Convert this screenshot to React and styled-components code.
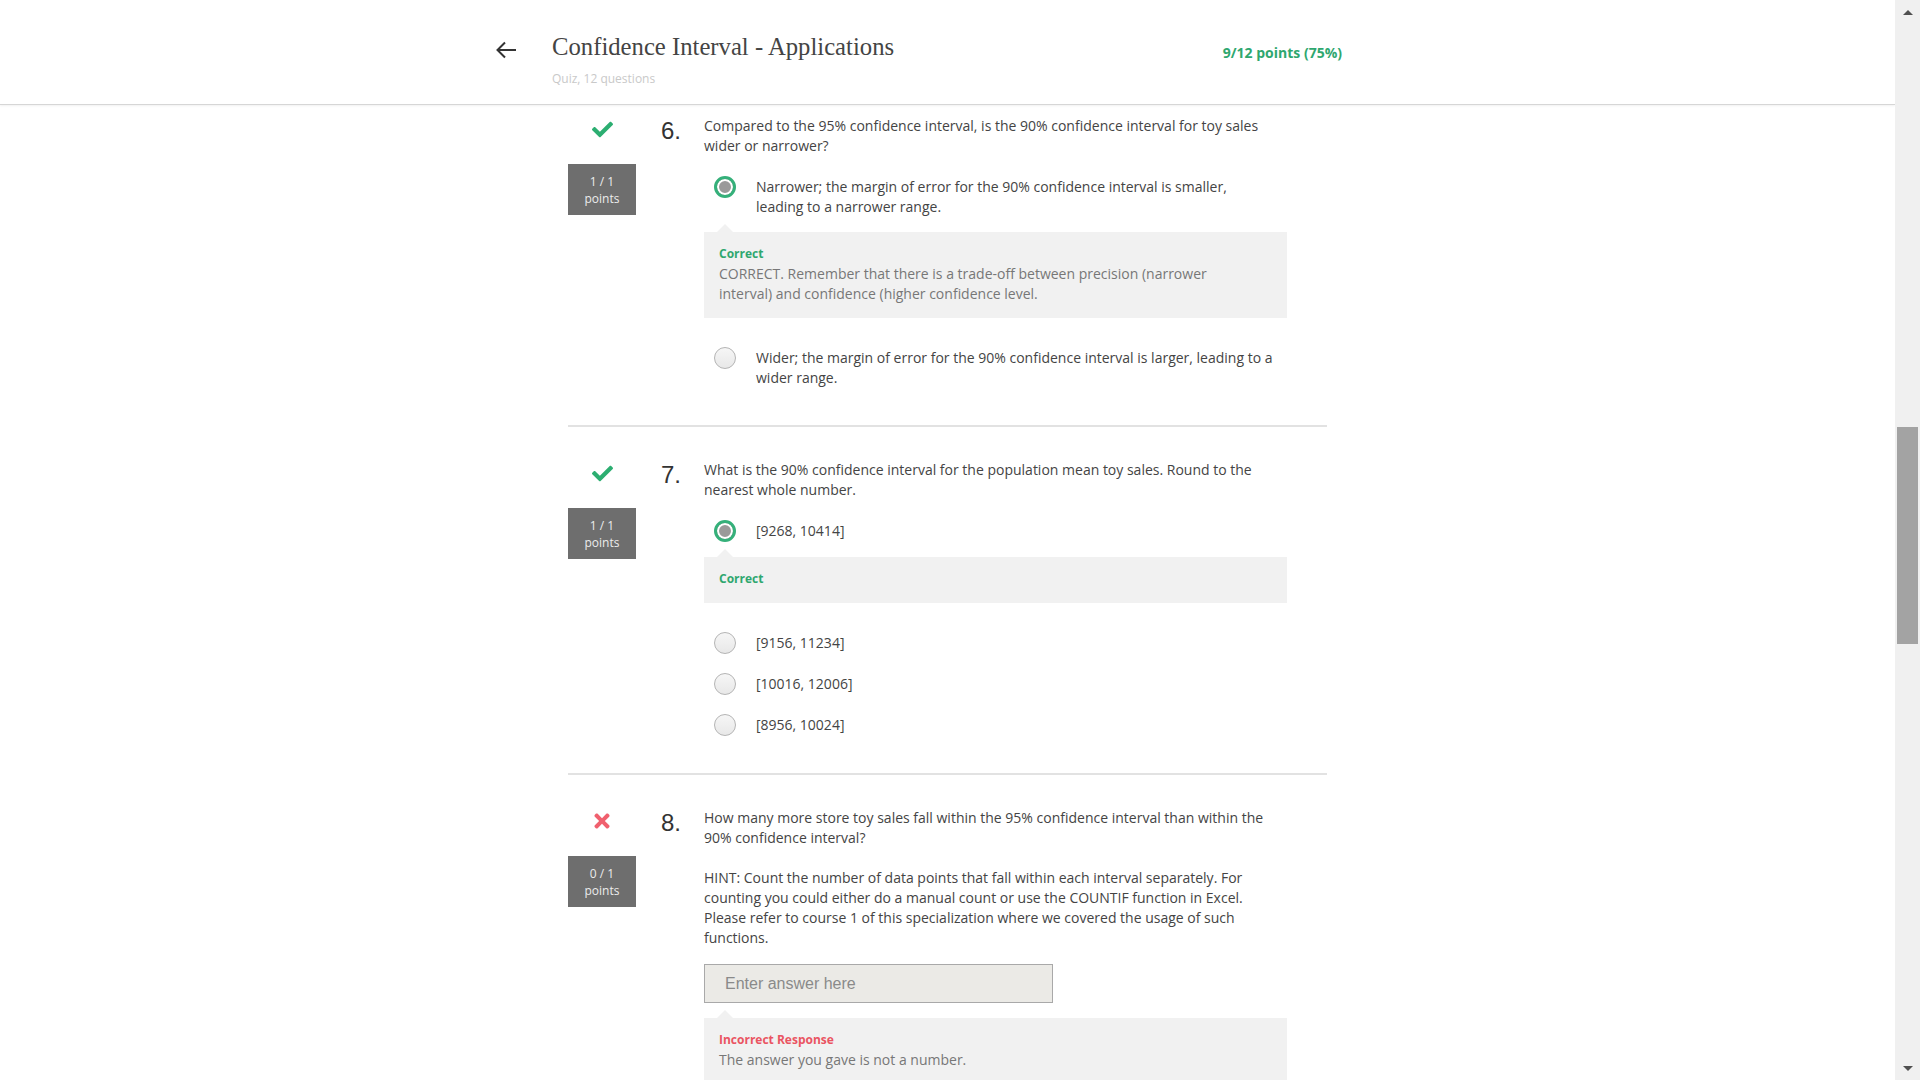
import React from "react";
import styled, { createGlobalStyle } from "styled-components";
import { FaCheck, FaTimes } from "react-icons/fa";

const GlobalStyle = createGlobalStyle`
  html, body {
    margin: 0;
    padding: 0;
    height: 100%;
    overflow: hidden;
    background: #fff;
  }
  body {
    font-family: "Open Sans", "Liberation Sans", sans-serif;
    color: #444;
  }
`;

const questions = [
  {
    num: 6,
    correct: true,
    score: "1 / 1",
    first: true,
    text: ["Compared to the 95% confidence interval, is the 90% confidence interval for toy sales wider or narrower?"],
    options: [
      {
        label: "Narrower; the margin of error for the 90% confidence interval is smaller, leading to a narrower range.",
        selected: true,
        feedback: {
          ok: true,
          title: "Correct",
          body: "CORRECT. Remember that there is a trade-off between precision (narrower interval) and confidence (higher confidence level.",
        },
      },
      { label: "Wider; the margin of error for the 90% confidence interval is larger, leading to a wider range." },
    ],
  },
  {
    num: 7,
    correct: true,
    score: "1 / 1",
    text: ["What is the 90% confidence interval for the population mean toy sales. Round to the nearest whole number."],
    options: [
      { label: "[9268, 10414]", selected: true, feedback: { ok: true, title: "Correct" } },
      { label: "[9156, 11234]" },
      { label: "[10016, 12006]" },
      { label: "[8956, 10024]" },
    ],
  },
  {
    num: 8,
    correct: false,
    score: "0 / 1",
    text: [
      "How many more store toy sales fall within the 95% confidence interval than within the 90% confidence interval?",
      "HINT: Count the number of data points that fall within each interval separately. For counting you could either do a manual count or use the COUNTIF function in Excel. Please refer to course 1 of this specialization where we covered the usage of such functions.",
    ],
    input: {
      placeholder: "Enter answer here",
      feedback: { ok: false, title: "Incorrect Response", body: "The answer you gave is not a number." },
    },
  },
];

function BackArrow() {
  return (
    <svg width="22" height="18" viewBox="0 0 22 18" fill="none">
      <path d="M21 9H2.5M10 1.5L2.5 9l7.5 7.5" stroke="#333" strokeWidth="2" />
    </svg>
  );
}

function Feedback({ data }) {
  return (
    <FeedbackBox>
      <FeedbackTitle $ok={data.ok}>{data.title}</FeedbackTitle>
      {data.body && <FeedbackBody>{data.body}</FeedbackBody>}
    </FeedbackBox>
  );
}

function Question({ q }) {
  return (
    <QuestionRow $first={q.first}>
      <Side>
        <StatusIcon $ok={q.correct}>
          {q.correct ? <FaCheck size={21} /> : <FaTimes size={22} />}
        </StatusIcon>
        <Score>
          <span>{q.score}</span>
          <span>points</span>
        </Score>
      </Side>
      <Number>{q.num}.</Number>
      <Body>
        {q.text.map((t, i) => (
          <Prompt key={i}>{t}</Prompt>
        ))}
        {q.options && (
          <Options>
            {q.options.map((o, i) => (
              <OptionGroup key={i}>
                <Option>
                  <Radio $selected={o.selected} />
                  <OptionLabel>{o.label}</OptionLabel>
                </Option>
                {o.feedback && <Feedback data={o.feedback} />}
              </OptionGroup>
            ))}
          </Options>
        )}
        {q.input && (
          <>
            <AnswerInput placeholder={q.input.placeholder} readOnly />
            <Feedback data={q.input.feedback} />
          </>
        )}
      </Body>
    </QuestionRow>
  );
}

export default function App() {
  return (
    <>
      <GlobalStyle />
      <Page>
        <Main>
          <Header>
            <HeaderInner>
              <BackButton>
                <BackArrow />
              </BackButton>
              <TitleBlock>
                <Title>Confidence Interval - Applications</Title>
                <Subtitle>Quiz, 12 questions</Subtitle>
              </TitleBlock>
              <Points>9/12 points (75%)</Points>
            </HeaderInner>
          </Header>
          <Content>
            <List>
              {questions.map((q) => (
                <Question key={q.num} q={q} />
              ))}
            </List>
          </Content>
        </Main>
        <Scrollbar>
          <ScrollArrow $up />
          <Track>
            <Thumb />
          </Track>
          <ScrollArrow />
        </Scrollbar>
      </Page>
    </>
  );
}

const Page = styled.div`
  display: flex;
  height: 100vh;
  width: 100vw;
  overflow: hidden;
`;

const Main = styled.div`
  flex: 1;
  display: flex;
  flex-direction: column;
  min-width: 0;
`;

const Header = styled.header`
  height: 105px;
  flex-shrink: 0;
  border-bottom: 1px solid #d6d6d6;
  box-shadow: 0 1px 2px rgba(0, 0, 0, 0.06);
  box-sizing: border-box;
`;

const HeaderInner = styled.div`
  width: 905px;
  margin: 0 auto;
  padding-right: 58px;
  box-sizing: border-box;
  display: flex;
  align-items: flex-start;
`;

const BackButton = styled.div`
  margin-top: 41px;
  width: 22px;
  height: 18px;
  margin-right: 35px;
  display: flex;
`;

const TitleBlock = styled.div`
  flex: 1;
  padding-top: 31px;
`;

const Title = styled.h1`
  margin: 0;
  font-family: "Liberation Serif", serif;
  font-weight: normal;
  font-size: 24.7px;
  line-height: 32px;
  color: #444;
`;

const Subtitle = styled.div`
  margin-top: 8px;
  font-size: 12px;
  line-height: 16px;
  color: #c9c9c9;
`;

const Points = styled.div`
  margin-top: 43px;
  font-size: 14px;
  font-weight: 700;
  line-height: 20px;
  color: #2fa76f;
`;

const Content = styled.div`
  flex: 1;
  overflow: hidden;
`;

const List = styled.div`
  width: 759px;
  margin: 0 auto;
`;

const QuestionRow = styled.section`
  display: flex;
  padding: ${(p) => (p.$first ? "11px" : "33px")} 40px 37px 0;
  & + & {
    border-top: 2px solid #e2e2e2;
  }
`;

const Side = styled.div`
  width: 68px;
  margin-right: 25px;
  display: flex;
  flex-direction: column;
  align-items: center;
  flex-shrink: 0;
`;

const StatusIcon = styled.div`
  height: 26px;
  display: flex;
  align-items: center;
  color: ${(p) => (p.$ok ? "#2cae71" : "#f0606e")};
`;

const Score = styled.div`
  margin-top: 22px;
  width: 68px;
  height: 51px;
  background: #6e6e6e;
  color: #ececec;
  font-size: 12px;
  line-height: 17px;
  display: flex;
  flex-direction: column;
  align-items: center;
  justify-content: center;
`;

const Number = styled.div`
  width: 43px;
  flex-shrink: 0;
  font-family: "Liberation Sans", Arial, sans-serif;
  font-size: 24px;
  line-height: 30px;
  color: #333;
`;

const Body = styled.div`
  flex: 1;
  min-width: 0;
`;

const Prompt = styled.p`
  margin: 0;
  font-size: 14px;
  line-height: 20px;
  color: #444;
  & + & {
    margin-top: 20px;
  }
`;

const Options = styled.div`
  margin-top: 20px;
  display: flex;
  flex-direction: column;
  gap: 19px;
`;

const OptionGroup = styled.div`
  display: flex;
  flex-direction: column;
`;

const Option = styled.div`
  display: flex;
  align-items: flex-start;
  padding-left: 10px;
`;

const Radio = styled.span`
  width: 22px;
  height: 22px;
  border-radius: 50%;
  box-sizing: border-box;
  flex-shrink: 0;
  margin-right: 20px;
  ${(p) =>
    p.$selected
      ? `
    border: 3px solid #35b07a;
    background: #9a9a9a;
    box-shadow: inset 0 0 0 2px #fff;
  `
      : `
    border: 1px solid #b4b4b4;
    background: linear-gradient(#f6f6f6, #e8e8e8);
  `}
`;

const OptionLabel = styled.div`
  padding-top: 1px;
  padding-right: 11px;
  font-size: 14px;
  line-height: 20px;
  color: #444;
`;

const FeedbackBox = styled.div`
  position: relative;
  margin: 15px 0 10px;
  background: #f1f1f1;
  padding: 12px 30px 14px 15px;
  &::before {
    content: "";
    position: absolute;
    top: -8px;
    left: 13px;
    border-left: 8px solid transparent;
    border-right: 8px solid transparent;
    border-bottom: 8px solid #f1f1f1;
  }
`;

const FeedbackTitle = styled.div`
  font-size: 12px;
  font-weight: 700;
  line-height: 20px;
  color: ${(p) => (p.$ok ? "#2fa76f" : "#ea5462")};
`;

const FeedbackBody = styled.div`
  font-size: 14px;
  line-height: 20px;
  color: #777;
`;

const AnswerInput = styled.input`
  display: block;
  margin-top: 16px;
  width: 349px;
  height: 39px;
  box-sizing: border-box;
  border: 1px solid #a9a9a9;
  background: #ebeae6;
  padding: 0 0 0 20px;
  font-family: "Liberation Sans", Arial, sans-serif;
  font-size: 16px;
  outline: none;
  &::placeholder {
    color: #8a8a8a;
  }
`;

const Scrollbar = styled.div`
  width: 25px;
  flex-shrink: 0;
  background: #f0f0f0;
  display: flex;
  flex-direction: column;
  align-items: center;
`;

const ScrollArrow = styled.div`
  height: 24px;
  width: 100%;
  display: flex;
  align-items: center;
  justify-content: center;
  &::after {
    content: "";
    border-left: 5px solid transparent;
    border-right: 5px solid transparent;
    ${(p) =>
      p.$up ? "border-bottom: 5px solid #505050;" : "border-top: 5px solid #505050;"}
  }
`;

const Track = styled.div`
  flex: 1;
  width: 100%;
  display: flex;
  justify-content: center;
  padding-top: 403px;
  box-sizing: border-box;
`;

const Thumb = styled.div`
  width: 21px;
  height: 217px;
  background: #a3a3a3;
`;
